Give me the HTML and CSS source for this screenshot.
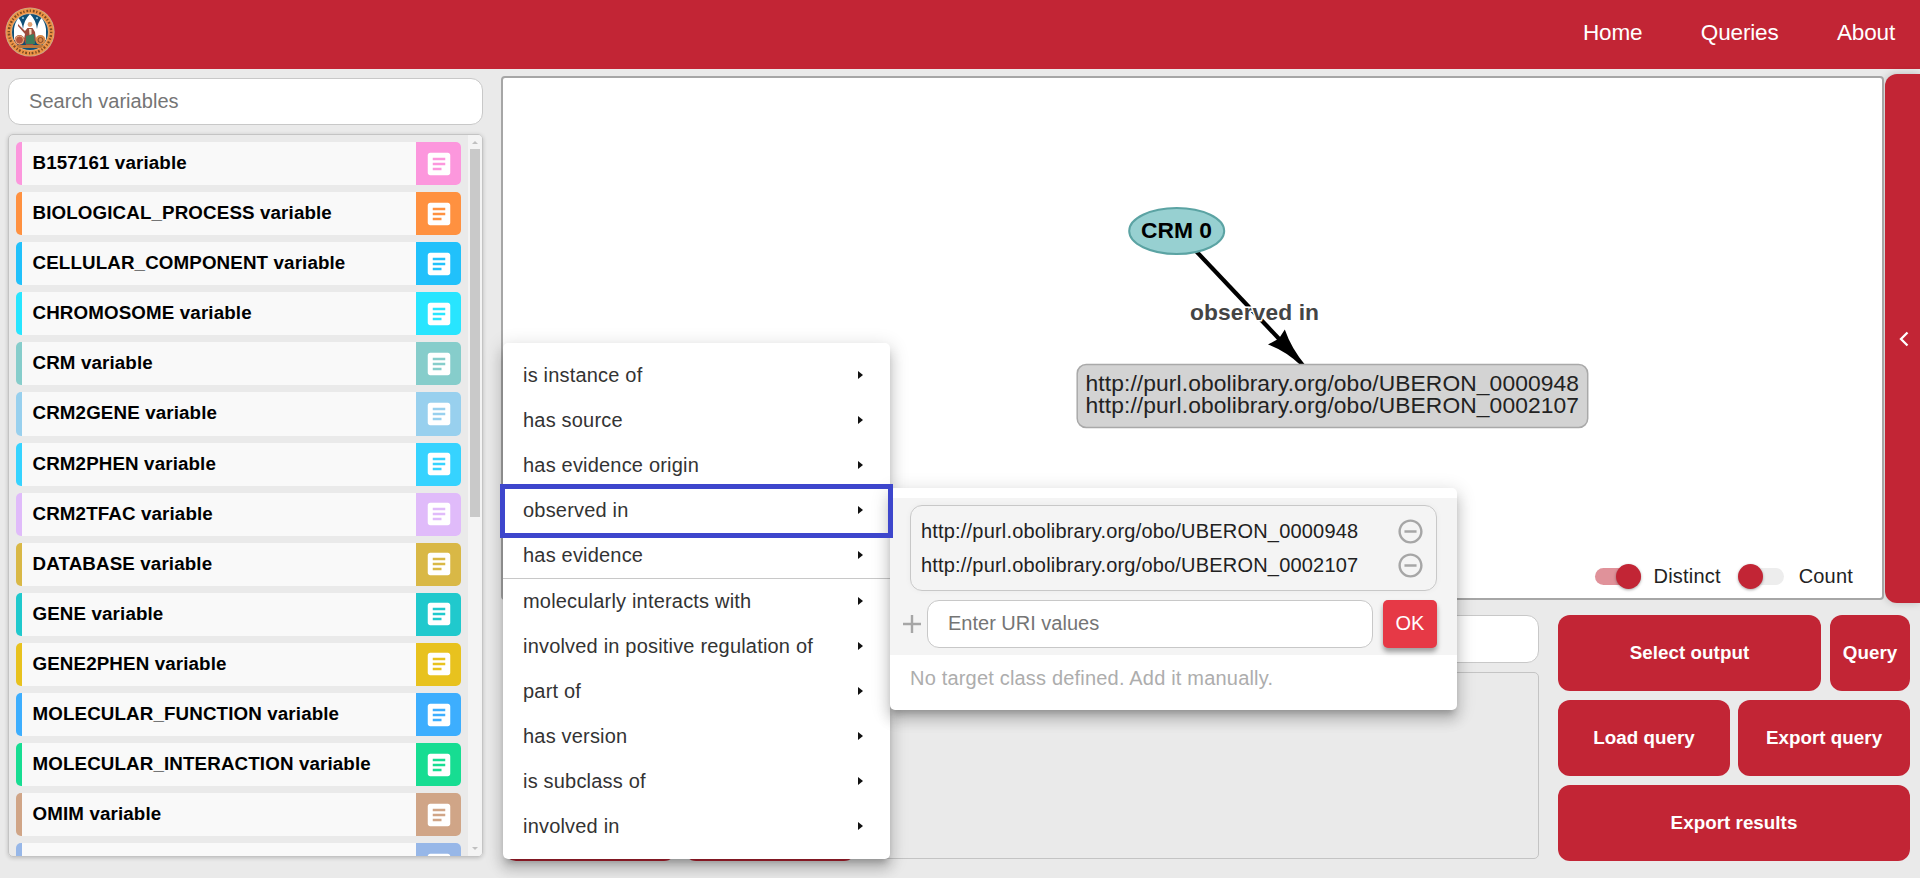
FILE: index.html
```
<!DOCTYPE html>
<html lang="en">
<head>
<meta charset="utf-8">
<title>Query builder</title>
<link rel="stylesheet" href="styles.css">
</head>
<body>
<svg width="0" height="0" class="defs" aria-hidden="true">
  <symbol id="doc" viewBox="0 0 24 24"><path d="M19 3H5c-1.100 0-2 .9-2 2v14c0 1.100.9 2 2 2h14c1.100 0 2-.9 2-2V5c0-1.100-.9-2-2-2zm-5 14H7v-2h7v2zm3-4H7v-2h10v2zm0-4H7V7h10v2z" fill="#fff"/></symbol>
  <symbol id="minus" viewBox="0 0 24 24"><path d="M7 11v2h10v-2H7zm5-9C6.480 2 2 6.480 2 12s4.480 10 10 10 10-4.480 10-10S17.520 2 12 2zm0 18c-4.410 0-8-3.590-8-8s3.590-8 8-8 8 3.590 8 8-3.590 8-8 8z" fill="#a6a6a6"/></symbol>
</svg>
<header class="topbar">
  <svg class="logo" width="50" height="50" viewBox="0 0 50 50">
    <circle cx="25" cy="25" r="24.600" fill="#c9a98a"/>
    <circle cx="25" cy="25" r="23.800" fill="#ee9346"/>
    <circle cx="25" cy="25" r="21.200" fill="none" stroke="#7a4a22" stroke-width="2.400" stroke-dasharray="1.200 2 1.800 1.600"/>
    <circle cx="25" cy="25" r="18.800" fill="#d9b58e"/>
    <circle cx="25" cy="25" r="18" fill="#0f5078"/>
    <path d="M9 33V22q1-7 4.500-11Q17 15 18 22q1-9 7-15 6 6 7 15 1-7 4.500-11Q40 15 41 22v11z" fill="#fff"/>
    <circle cx="18" cy="11" r="1.100" fill="#8fc4dd"/><circle cx="32" cy="11" r="1.100" fill="#8fc4dd"/>
    <path d="M13 17l7 7 2.500-3h5l2.500 4 1 8-3 5h-7l-2-6 1-5-7-8z" fill="#9c4a3c"/>
    <circle cx="25" cy="17.500" r="2.400" fill="#e0a173"/>
    <path d="M21 29l8-2 1 10h-9z" fill="#3d7d5c"/>
    <path d="M24 22l2.500 0 0 5-2 1z" fill="#f0dcc0"/>
    <circle cx="14.500" cy="33" r="5" fill="#b5523b"/><circle cx="14.500" cy="33" r="4" fill="none" stroke="#e5b080"/>
    <circle cx="35.500" cy="33" r="5" fill="#d98a48"/><circle cx="35.500" cy="33" r="2.500" fill="none" stroke="#8a4a28"/>
    <path d="M11 38h28l-3 3H14z" fill="#b9763c"/>
  </svg>
  <nav class="nav"><a>Home</a><a>Queries</a><a>About</a></nav>
</header>
<main class="layout">
  <aside class="sidebar">
    <div class="field search">Search variables</div>
    <div class="varbox">
      <div class="vars">
        <div class="var c1"><span>B157161 variable</span><i><svg><use href="#doc"/></svg></i></div>
        <div class="var c2"><span>BIOLOGICAL_PROCESS variable</span><i><svg><use href="#doc"/></svg></i></div>
        <div class="var c3"><span>CELLULAR_COMPONENT variable</span><i><svg><use href="#doc"/></svg></i></div>
        <div class="var c4"><span>CHROMOSOME variable</span><i><svg><use href="#doc"/></svg></i></div>
        <div class="var c5"><span>CRM variable</span><i><svg><use href="#doc"/></svg></i></div>
        <div class="var c6"><span>CRM2GENE variable</span><i><svg><use href="#doc"/></svg></i></div>
        <div class="var c7"><span>CRM2PHEN variable</span><i><svg><use href="#doc"/></svg></i></div>
        <div class="var c8"><span>CRM2TFAC variable</span><i><svg><use href="#doc"/></svg></i></div>
        <div class="var c9"><span>DATABASE variable</span><i><svg><use href="#doc"/></svg></i></div>
        <div class="var c10"><span>GENE variable</span><i><svg><use href="#doc"/></svg></i></div>
        <div class="var c11"><span>GENE2PHEN variable</span><i><svg><use href="#doc"/></svg></i></div>
        <div class="var c12"><span>MOLECULAR_FUNCTION variable</span><i><svg><use href="#doc"/></svg></i></div>
        <div class="var c13"><span>MOLECULAR_INTERACTION variable</span><i><svg><use href="#doc"/></svg></i></div>
        <div class="var c14"><span>OMIM variable</span><i><svg><use href="#doc"/></svg></i></div>
        <div class="var c15"><span></span><i><svg><use href="#doc"/></svg></i></div>
      </div>
      <div class="scroll"><b class="up"></b><b class="thumb"></b><b class="down"></b></div>
    </div>
  </aside>
  <section class="work">
    <div class="stage">
      <div class="canvas">
        <svg class="graph" width="1379" height="520" viewBox="503 78 1379 520">
          <path d="M1195 250L1282 342" stroke="#000" stroke-width="4.200"/>
          <path d="M1306 366Q1291.500 349 1284.800 329.500L1279 338.500L1268 344.500Q1286 351 1301.500 366z"/>
          <ellipse cx="1176.700" cy="231" rx="47.500" ry="23" fill="#97d0d1" stroke="#5ba3a3" stroke-width="2"/>
          <text x="1141" y="237.500" class="node" textLength="71">CRM 0</text>
          <text x="1190" y="319.500" class="edge" textLength="129">observed in</text>
          <rect x="1077.200" y="364.500" width="510.500" height="63" rx="9" fill="#d3d3d3" stroke="#a9a9a9" stroke-width="1.500"/>
          <text x="1085.500" y="390.700" class="uri" textLength="493.500">http://purl.obolibrary.org/obo/UBERON_0000948</text>
          <text x="1085.500" y="413.300" class="uri" textLength="493.500">http://purl.obolibrary.org/obo/UBERON_0002107</text>
        </svg>
        <div class="switches">
          <span class="switch on"></span><span class="lbl">Distinct</span>
          <span class="switch"></span><span class="lbl">Count</span>
        </div>
      </div>
      <div class="drawer"><svg width="10" height="16" viewBox="0 0 10 16"><path d="M8.500 1.500L2 8l6.500 6.500" fill="none" stroke="#fff" stroke-width="2.300"/></svg></div>
    </div>
    <div class="bottom">
      <div class="filters">
        <div class="field"></div>
        <div class="panel"><span class="btn"></span><span class="btn"></span></div>
      </div>
      <div class="actions">
        <div class="row first"><button class="btn wide">Select output</button><button class="btn narrow">Query</button></div>
        <div class="row"><button class="btn wide">Load query</button><button class="btn wide">Export query</button></div>
        <div class="row"><button class="btn wide">Export results</button></div>
      </div>
    </div>
  </section>
</main>
<div class="menu">
  <div class="item">is instance of</div>
  <div class="item">has source</div>
  <div class="item">has evidence origin</div>
  <div class="item">observed in</div>
  <div class="item">has evidence</div>
  <div class="item divided">molecularly interacts with</div>
  <div class="item">involved in positive regulation of</div>
  <div class="item">part of</div>
  <div class="item">has version</div>
  <div class="item">is subclass of</div>
  <div class="item">involved in</div>
</div>
<div class="submenu">
  <div class="editor">
    <div class="uris">
      <div class="urirow"><span>http://purl.obolibrary.org/obo/UBERON_0000948</span><svg><use href="#minus"/></svg></div>
      <div class="urirow"><span>http://purl.obolibrary.org/obo/UBERON_0002107</span><svg><use href="#minus"/></svg></div>
    </div>
    <div class="entry">
      <svg class="plus" width="18" height="18" viewBox="0 0 18 18"><path d="M9 0v18M0 9h18" stroke="#a6a6a6" stroke-width="2.400"/></svg>
      <div class="field">Enter URI values</div>
      <button class="ok">OK</button>
    </div>
  </div>
  <p class="note">No target class defined. Add it manually.</p>
</div>
<div class="highlight"></div>
</body>
</html>
```
FILE: styles.css
```
* { box-sizing: border-box; }
body {
  margin: 0;
  width: 1920px;
  height: 878px;
  overflow: hidden;
  display: flex;
  flex-direction: column;
  background: #eaeaea;
  font-family: "Liberation Sans", Arial, sans-serif;
  font-size: 20px;
}
.defs { position: absolute; }
.topbar {
  flex: none;
  height: 69px;
  background: #c22535;
  display: flex;
  justify-content: space-between;
  padding: 7px 25px 0 5px;
}
.nav { display: flex; gap: 58.500px; padding-top: 13px; }
.nav a { color: #fff; font-size: 22.500px; line-height: 26px; letter-spacing: -.16px; }
.layout { flex: 1; display: flex; min-height: 0; }
.sidebar { width: 501px; padding: 9px 18px 0 8px; display: flex; flex-direction: column; gap: 9px; }
.field {
  height: 47px;
  background: #fff;
  border: 1px solid #c8c8c8;
  border-radius: 12px;
  padding: 0 20px;
  line-height: 44px;
  color: #757575;
}
.search { flex: none; letter-spacing: .040px; }
.varbox {
  height: 723px;
  border: 1px solid #c4c4c4;
  border-radius: 5px;
  box-shadow: 0 1px 4px rgba(0,0,0,.2);
  display: flex;
  overflow: hidden;
}
.vars { flex: 1; padding: 7px 7px 0; display: flex; flex-direction: column; gap: 7px; overflow: hidden; }
.var {
  flex: none;
  height: 43.100px;
  display: flex;
  border-left: 6px solid var(--c);
  border-radius: 5px;
  background: #f9f9f9;
  overflow: hidden;
}
.var span { flex: 1; padding-left: 10.500px; font-weight: bold; font-size: 18.750px; line-height: 42px; letter-spacing: .13px; white-space: nowrap; }
.var i { width: 45px; background: var(--c); display: flex; align-items: center; justify-content: center; }
.var svg { width: 30px; height: 30px; }
.c1 { --c: #fc97dd; } .c2 { --c: #ff9140; } .c3 { --c: #21c1fb; } .c4 { --c: #28e5ff; } .c5 { --c: #86cdcb; }
.c6 { --c: #98d0ee; } .c7 { --c: #36d3ff; } .c8 { --c: #e0bbfa; } .c9 { --c: #d9b846; } .c10 { --c: #20c9cd; }
.c11 { --c: #e8c21e; } .c12 { --c: #3daefe; } .c13 { --c: #17dd92; } .c14 { --c: #d0a587; } .c15 { --c: #97b7e8; }
.scroll { width: 14px; background: #f4f4f4; display: flex; flex-direction: column; align-items: center; padding: 6px 0; }
.up { border: 3px solid transparent; border-top: 0; border-bottom-color: #c0c0c0; }
.thumb { width: 10px; height: 368px; margin-top: 5px; background: #c9c9c9; }
.down { margin-top: auto; border: 3px solid transparent; border-bottom: 0; border-top-color: #c0c0c0; }
.work { flex: 1; display: flex; flex-direction: column; }
.stage { display: flex; height: 534px; padding-top: 5px; gap: 1px; }
.canvas {
  width: 1383px;
  height: 524px;
  margin-top: 2px;
  background: #fff;
  border: 2px solid #a6a6a6;
  border-radius: 4px;
  position: relative;
}
.graph { display: block; }
.graph text { font-size: 22.800px; }
.graph .node, .graph .edge { font-weight: bold; }
.graph .edge { fill: #444; stroke: #fff; stroke-width: 3px; paint-order: stroke; }
.graph .uri { fill: #222; }
.switches {
  position: absolute;
  right: 29px;
  bottom: 9px;
  height: 25px;
  display: flex;
  align-items: center;
  color: #222;
}
.switch { width: 46px; height: 17px; border-radius: 9px; background: #ededed; display: flex; align-items: center; }
.switch::before {
  content: "";
  width: 25px;
  height: 25px;
  flex: none;
  border-radius: 50%;
  background: #c22535;
  box-shadow: 0 1px 3px rgba(0,0,0,.35);
}
.switch.on { background: #e0929a; justify-content: flex-end; }
.lbl { margin-left: 13px; margin-right: 17px; letter-spacing: .19px; }
.lbl:last-child { margin: 0 0 0 15px; }
.drawer {
  width: 35px;
  height: 529px;
  background: #c22535;
  border-radius: 12px 0 0 12px;
  box-shadow: 0 0 8px rgba(0,0,0,.2);
  display: flex;
  align-items: center;
  padding-left: 14px;
}
.bottom { display: flex; padding: 12px 10px 0 2px; gap: 19px; }
.filters { width: 1036px; display: flex; flex-direction: column; gap: 9px; }
.filters .field { height: 48px; }
.panel {
  height: 187px;
  border: 1px solid #c4c4c4;
  border-radius: 5px;
  display: flex;
  align-items: flex-end;
  gap: 8px;
}
.panel .btn { width: 172px; height: 76px; margin-bottom: -3px; }
.actions { flex: 1; display: flex; flex-direction: column; gap: 9px; }
.row { display: flex; gap: 8px; }
.first { gap: 9px; }
.btn {
  height: 76px;
  border: 0;
  border-radius: 12px;
  background: #c22535;
  color: #fff;
  font: bold 18.750px "Liberation Sans", Arial, sans-serif;
  padding: 0 0 1px;
  letter-spacing: .050px;
}
.wide { flex: 1; }
.narrow { width: 80px; }
.menu, .submenu {
  position: absolute;
  background: #fff;
  border-radius: 5px;
  box-shadow: 0 6px 6px -3px rgba(0,0,0,.2), 0 10px 13px 1px rgba(0,0,0,.14), 0 4px 18px 3px rgba(0,0,0,.12);
  color: #212121;
}
.menu { left: 503px; top: 343px; width: 387px; padding: 10px 0; }
.item {
  height: 45px;
  padding: 0 27px 0 20px;
  display: flex;
  align-items: center;
  justify-content: space-between;
  letter-spacing: .19px;
  color: #333;
}
.item::after { content: ""; border: 4.500px solid transparent; border-left: 5px solid #111; border-right: 0; margin-bottom: 1px; }
.divided { height: 46px; border-top: 1px solid #c8c8c8; }
.submenu { left: 890px; top: 488px; width: 567px; height: 222px; padding-top: 10px; }
.editor { background: #f4f4f4; height: 157px; padding: 7px 20px 0; }
.uris { height: 86px; border: 1px solid #c8c8c8; border-radius: 12px; padding: 8px 11px 0 10px; box-shadow: 0 0 6px rgba(0,0,0,.04); }
.urirow { height: 34px; display: flex; justify-content: space-between; align-items: center; }
.urirow span { white-space: nowrap; letter-spacing: .19px; padding-top: 1px; }
.urirow svg { width: 29px; height: 29px; }
.entry { display: flex; align-items: center; margin: 9px 0 0 -7px; }
.entry .field { width: 446px; height: 48px; margin: 0 10px 0 6px; }
.ok {
  width: 54px;
  height: 48px;
  border: 0;
  border-radius: 5px;
  background: #e63946;
  color: #fff;
  font: 20px "Liberation Sans", Arial, sans-serif;
  padding: 0 0 2px;
  box-shadow: 0 4px 5px rgba(0,0,0,.35);
}
.note { margin: 12px 20px; line-height: 23px; color: #adadad; letter-spacing: .19px; }
.highlight { position: absolute; left: 500px; top: 484px; width: 393px; height: 54px; border: 5px solid #3d46cc; }
```
